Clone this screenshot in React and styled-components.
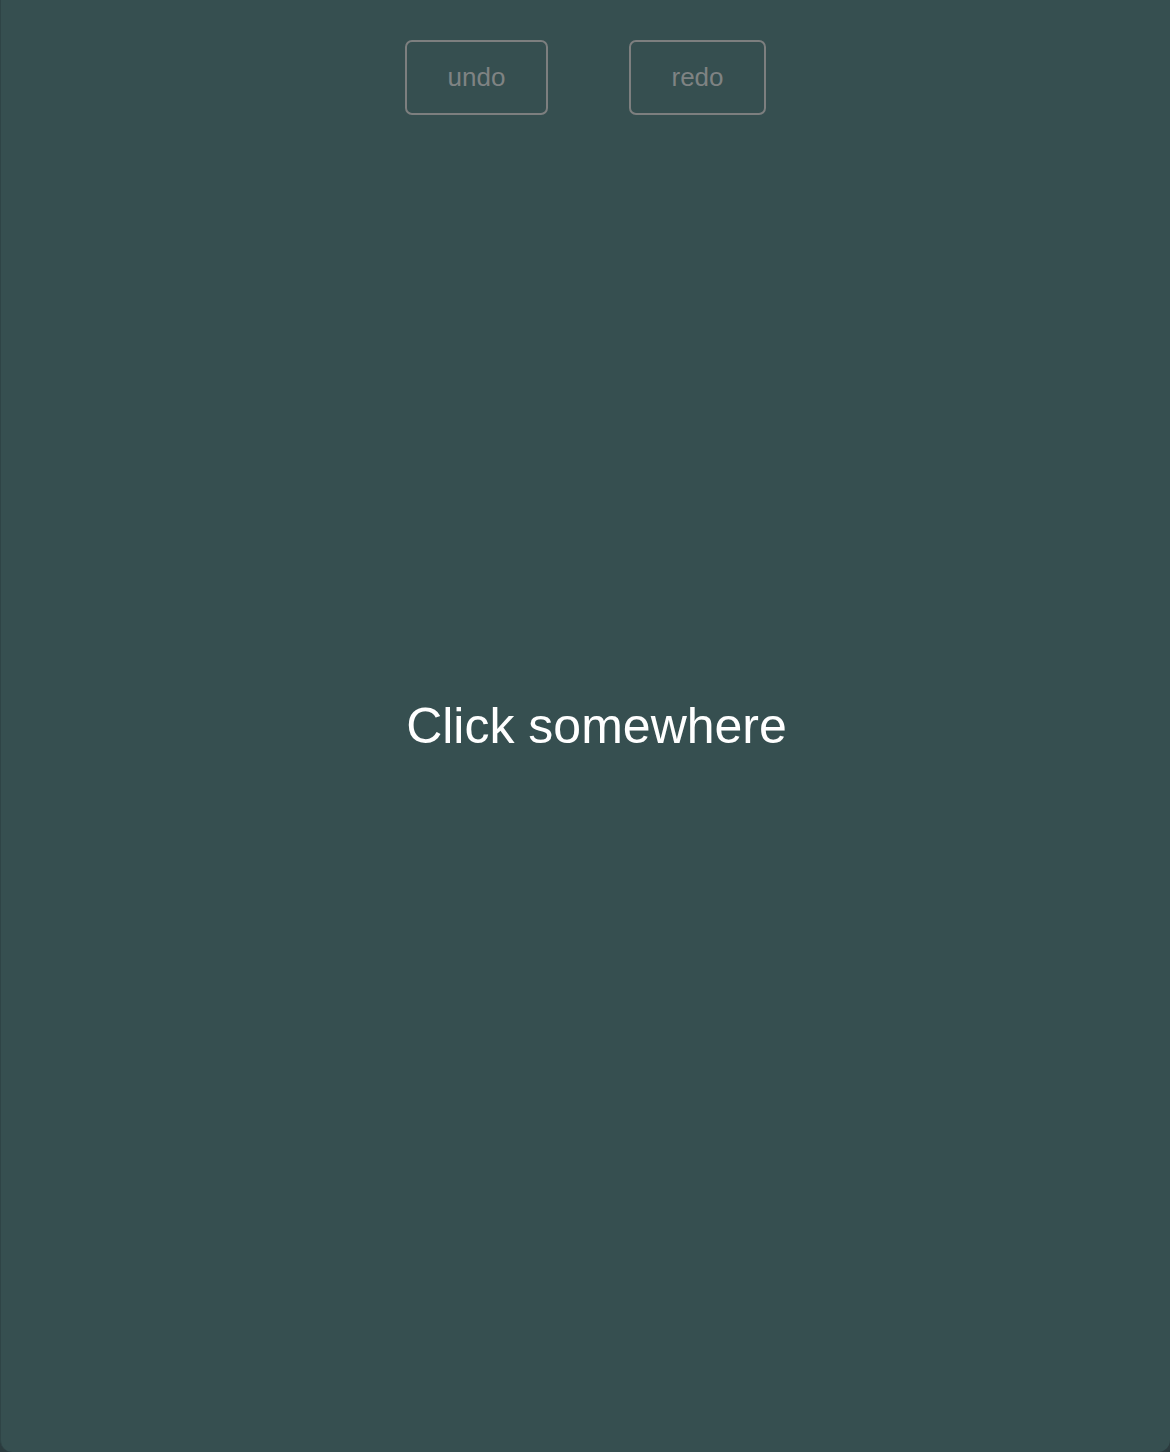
import React from "react";
import styled, { createGlobalStyle } from "styled-components";

const Global = createGlobalStyle`
  html, body {
    margin: 0;
    padding: 0;
    background: #2b3b3e;
  }
  body {
    font-family: "Liberation Sans", Arial, sans-serif;
  }
`

const Stage = styled.div`
  box-sizing: border-box;
  height: 100vh;
  background: #364f50;
  border-left: 1px solid #2f4446;
  border-radius: 0 0 12px 12px;
  display: grid;
  grid-template-rows: 1fr auto 1fr;
  justify-items: center;
  overflow: hidden;
`

const Toolbar = styled.div`
  align-self: start;
  display: flex;
  gap: 81px;
  padding-top: 40px;
`

const Button = styled.button`
  box-sizing: border-box;
  width: ${props => props.w}px;
  height: 75px;
  padding: 0;
  background: transparent;
  border: 2px solid #7d7f7f;
  border-radius: 7px;
  color: #7f8383;
  font-family: "Liberation Sans", Arial, sans-serif;
  font-size: 26px;
  cursor: pointer;
`

const Label = styled.div`
  color: #ffffff;
  font-size: 50px;
  line-height: 60px;
  padding-left: 22px;
`

export default function App() {
    return (
        <Stage>
            <Global />
            <Toolbar>
                <Button w={143}>undo</Button>
                <Button w={137}>redo</Button>
            </Toolbar>
            <Label>Click somewhere</Label>
            <div></div>
        </Stage>
    )
}
